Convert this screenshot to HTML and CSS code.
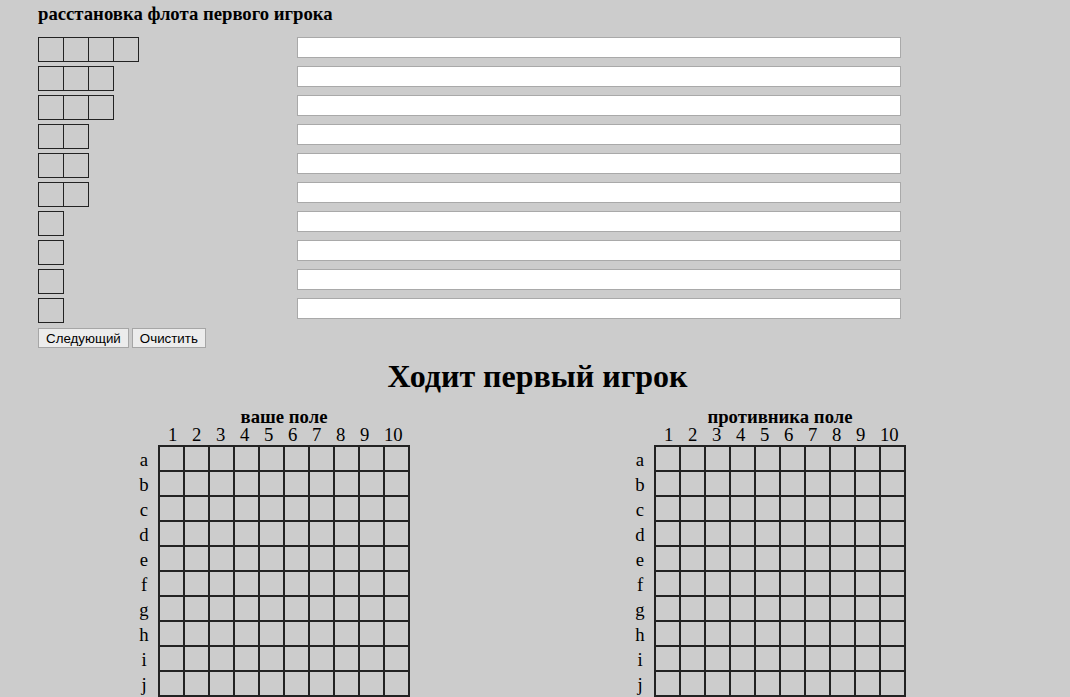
FILE: index.html
```html
<!DOCTYPE html>
<html lang="ru">
<head>
<meta charset="utf-8">
<title>Морской бой</title>
<link rel="stylesheet" href="styles.css">
</head>
<body>
<div class="page">
  <h3 class="title">расстановка флота первого игрока</h3>
  <div class="fleet">
    <div class="ship-row"><div class="ship-cell"><table class="ship"><tr><td></td><td></td><td></td><td></td></tr></table></div><input class="coord" type="text"></div>
    <div class="ship-row"><div class="ship-cell"><table class="ship"><tr><td></td><td></td><td></td></tr></table></div><input class="coord" type="text"></div>
    <div class="ship-row"><div class="ship-cell"><table class="ship"><tr><td></td><td></td><td></td></tr></table></div><input class="coord" type="text"></div>
    <div class="ship-row"><div class="ship-cell"><table class="ship"><tr><td></td><td></td></tr></table></div><input class="coord" type="text"></div>
    <div class="ship-row"><div class="ship-cell"><table class="ship"><tr><td></td><td></td></tr></table></div><input class="coord" type="text"></div>
    <div class="ship-row"><div class="ship-cell"><table class="ship"><tr><td></td><td></td></tr></table></div><input class="coord" type="text"></div>
    <div class="ship-row"><div class="ship-cell"><table class="ship"><tr><td></td></tr></table></div><input class="coord" type="text"></div>
    <div class="ship-row"><div class="ship-cell"><table class="ship"><tr><td></td></tr></table></div><input class="coord" type="text"></div>
    <div class="ship-row"><div class="ship-cell"><table class="ship"><tr><td></td></tr></table></div><input class="coord" type="text"></div>
    <div class="ship-row"><div class="ship-cell"><table class="ship"><tr><td></td></tr></table></div><input class="coord" type="text"></div>
  </div>
  <div class="actions"><button class="btn" type="button">Следующий</button><button class="btn" type="button">Очистить</button></div>
  <h1 class="turn">Ходит первый игрок</h1>
  <div class="boards">
    <section class="board">
      <div class="board-title">ваше поле</div>
      <div class="cols"><span>1</span><span>2</span><span>3</span><span>4</span><span>5</span><span>6</span><span>7</span><span>8</span><span>9</span><span>10</span></div>
      <div class="rows"><span>a</span><span>b</span><span>c</span><span>d</span><span>e</span><span>f</span><span>g</span><span>h</span><span>i</span><span>j</span></div>
      <table class="field" id="own"></table>
    </section>
    <section class="board">
      <div class="board-title">противника поле</div>
      <div class="cols"><span>1</span><span>2</span><span>3</span><span>4</span><span>5</span><span>6</span><span>7</span><span>8</span><span>9</span><span>10</span></div>
      <div class="rows"><span>a</span><span>b</span><span>c</span><span>d</span><span>e</span><span>f</span><span>g</span><span>h</span><span>i</span><span>j</span></div>
      <table class="field" id="enemy"></table>
    </section>
  </div>
</div>
<script>
  document.querySelectorAll('.field').forEach(function (t) {
    for (var r = 0; r < 10; r++) {
      var tr = document.createElement('tr');
      for (var c = 0; c < 10; c++) tr.appendChild(document.createElement('td'));
      t.appendChild(tr);
    }
  });
</script>
</body>
</html>
```

FILE: styles.css
```css
html, body {
  margin: 0;
  padding: 0;
  background: #cccccc;
}

body {
  font-family: "Liberation Serif", "Times New Roman", serif;
  color: #000;
}

.page {
  padding-left: 38px;
}

.title {
  margin: 0;
  padding-top: 3px;
  font-size: 18.72px;
  font-weight: bold;
  line-height: 22px;
}

.fleet {
  margin-top: 12px;
  display: flex;
  flex-direction: column;
  gap: 4px;
}

.ship-row {
  display: flex;
  align-items: flex-start;
  height: 25px;
}

.ship-cell {
  width: 259px;
  flex: none;
}

.ship {
  border-collapse: collapse;
}

.ship td {
  width: 24px;
  height: 23px;
  padding: 0;
  border: 1px solid #222;
}

.coord {
  box-sizing: border-box;
  width: 604px;
  height: 21px;
  margin: 0;
  padding: 1px 2px;
  border: 1px solid #a9a9a9;
  background: #fff;
  font-family: "Liberation Sans", Arial, sans-serif;
  font-size: 13.33px;
}

.actions {
  margin-top: 5px;
  display: flex;
  gap: 3px;
}

.btn {
  box-sizing: border-box;
  height: 20px;
  margin: 0;
  padding: 0 7px;
  border: 1px solid #a6a6a6;
  border-radius: 0;
  background: #ececec;
  font-family: "Liberation Sans", Arial, sans-serif;
  font-size: 13.33px;
  color: #000;
}

.turn {
  margin: 10px 0 0 -38px;
  padding-left: 5px;
  font-size: 32px;
  font-weight: bold;
  text-align: center;
  line-height: normal;
}

.boards {
  margin-top: 13px;
  margin-left: 92px;
  display: flex;
  gap: 216px;
}

.board {
  display: grid;
  grid-template-columns: 28px 252px;
  grid-template-rows: 18px 18px auto;
  row-gap: 0;
  font-size: 18.72px;
}

.board-title {
  grid-column: 2;
  grid-row: 1;
  text-align: center;
  font-weight: bold;
  line-height: 18px;
  white-space: nowrap;
}

.cols {
  grid-column: 2;
  grid-row: 2;
  padding-left: 10px;
  line-height: 18px;
  white-space: nowrap;
}

.cols span {
  display: inline-block;
  width: 24px;
}

.rows {
  grid-column: 1;
  grid-row: 3;
  margin-top: 3px;
  display: flex;
  flex-direction: column;
}

.rows span {
  height: 25px;
  line-height: 25px;
  text-align: center;
}

.field {
  grid-column: 2;
  grid-row: 3;
  margin-top: 1px;
  border-collapse: collapse;
}

.field td {
  width: 23px;
  height: 23px;
  padding: 0;
  border: 2px solid #222;
}
```
